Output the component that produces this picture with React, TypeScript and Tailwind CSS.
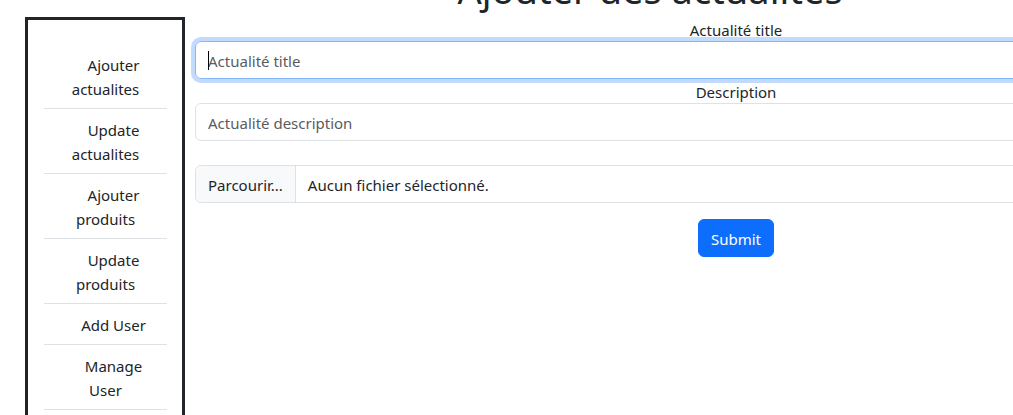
const navItems = [
  "Ajouter actualites",
  "Update actualites",
  "Ajouter produits",
  "Update produits",
  "Add User",
  "Manage User",
  "Logout",
];

const App = () => {
  return (
    <div className="w-[1013px] h-[415px] overflow-hidden bg-white text-[#212529] font-['Noto_Sans',sans-serif] text-[15px]">
      <div className="w-[1300px]">
        {/* {Page title} */}
        <h1 className="text-[38px] leading-[48px] font-normal text-center -mt-[35px] mb-[4px]">
          Ajouter des actualites
        </h1>
        <div className="flex items-start">
          {/* {Sidebar} */}
          <nav className="ml-[25px] w-[160px] h-[460px] border-[3px] border-[#212529] pt-6 pl-4 pr-[15px]">
            <ul>
              {navItems.map((item) => (
                <li key={item} className="border-b border-[#dee2e6]">
                  <a href="#" className="block px-4 pt-[9px] pb-[7px] leading-6 text-center indent-4">
                    {item}
                  </a>
                </li>
              ))}
            </ul>
          </nav>
          {/* {Form} */}
          <form className="ml-[10px] w-[1082px] flex flex-col">
            <label className="block h-6 text-center leading-[26px]">Actualité title</label>
            <div className="relative">
              <input
                type="text"
                placeholder="Actualité title"
                className="w-full h-[38px] rounded-md border border-[#86b7fe] shadow-[0_0_0_4px_rgba(13,110,253,0.25)] px-3 pt-[2px] outline-none placeholder:text-[#595c5f]"
              />
              <span className="absolute left-[13px] top-[10px] w-px h-[19px] bg-black" />
            </div>
            <label className="block h-6 text-center leading-[26px]">Description</label>
            <input
              type="text"
              placeholder="Actualité description"
              className="w-full h-[38px] rounded-md border border-[#dee2e6] px-3 pt-[2px] outline-none placeholder:text-[#595c5f]"
            />
            <div className="mt-6 flex h-[38px] rounded-md border border-[#dee2e6] overflow-hidden">
              <span className="flex items-center px-3 pt-[2px] bg-[#f8f9fa] border-r border-[#dee2e6]">
                Parcourir...
              </span>
              <span className="flex items-center ml-3 pt-[2px]">Aucun fichier sélectionné.</span>
            </div>
            <button
              type="button"
              className="mt-4 self-center h-[38px] px-3 pt-[2px] rounded-md bg-[#0d6efd] text-white border border-[#0d6efd]"
            >
              Submit
            </button>
          </form>
        </div>
      </div>
    </div>
  );
};

export default App;
